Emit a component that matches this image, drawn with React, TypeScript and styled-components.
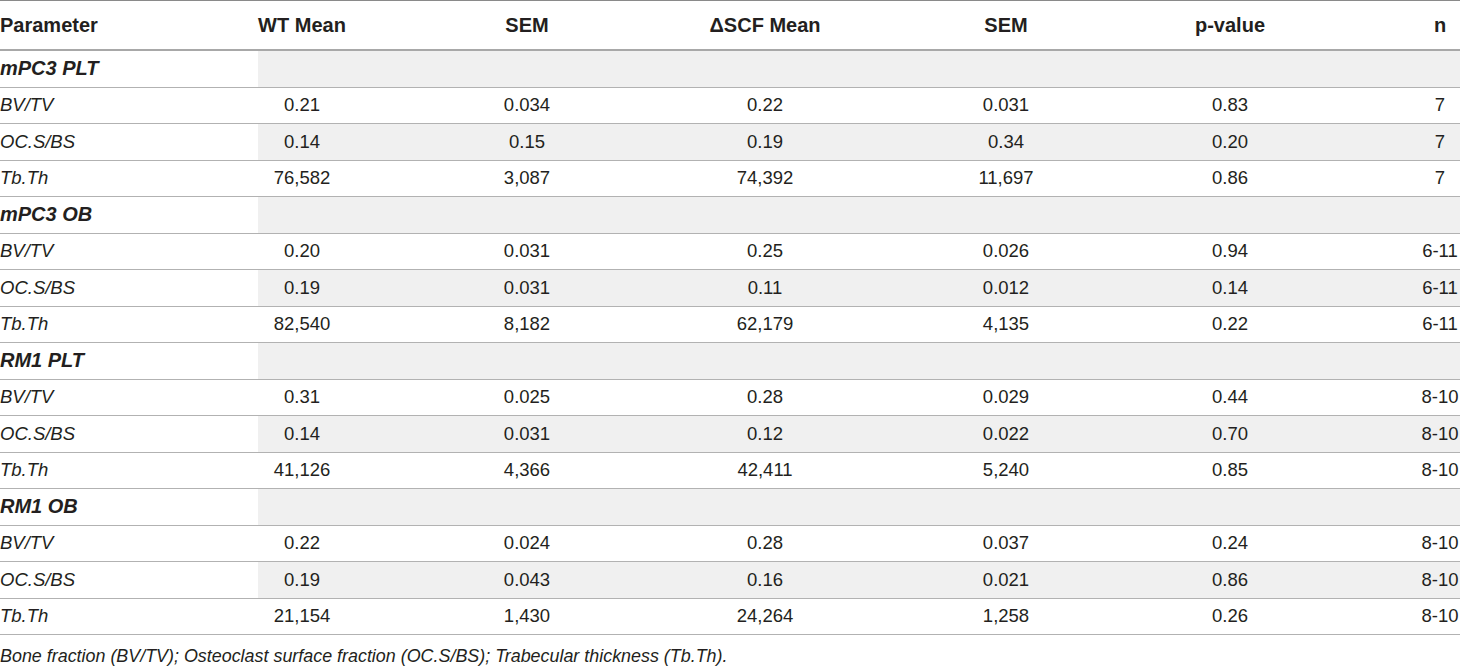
import React from "react";
import styled, { createGlobalStyle } from "styled-components";

const Global = createGlobalStyle`
  html, body { margin: 0; padding: 0; background: #ffffff; }
  body { font-family: "Liberation Sans", Arial, Helvetica, sans-serif; color: #231f20; }
`;

const Wrap = styled.div`
  width: 1460px;
`;

const Table = styled.table`
  width: 1460px;
  border-collapse: collapse;
  table-layout: fixed;
  border-top: 1px solid #8a8a8a;
  font-size: 18.5px;
`;

const HeadCell = styled.th<{ $align?: string; $padLeft?: number }>`
  height: 48px;
  padding: 0 0 0 ${(p) => p.$padLeft ?? 0}px;
  font-weight: bold;
  font-size: 20px;
  text-align: ${(p) => p.$align ?? "center"};
  vertical-align: middle;
  border-bottom: 2px solid #a8a8a8;
`;

const Row = styled.tr<{ $shade: boolean }>`
  border-bottom: 1px solid #b2b2b2;
  & > td:not(:first-child) {
    background: ${(p) => (p.$shade ? "#f0f0f0" : "#ffffff")};
  }
`;

const Cell = styled.td<{ $align?: string; $padLeft?: number }>`
  height: 35.5px;
  padding: 0 0 0 ${(p) => p.$padLeft ?? 0}px;
  text-align: ${(p) => p.$align ?? "center"};
  vertical-align: middle;
  white-space: nowrap;
`;

const GroupLabel = styled.span`
  font-weight: bold;
  font-style: italic;
  font-size: 20px;
`;

const ParamLabel = styled.span`
  font-style: italic;
`;

const Caption = styled.p`
  margin: 11px 0 0 0;
  font-size: 17.9px;
  font-style: italic;
  line-height: 21px;
`;

const widths = [258, 88, 362, 114, 368, 80, 190];
const N_PAD = 150;

type Param = { name: string; v: string[] };
type Group = { title: string; rows: Param[] };

const groups: Group[] = [
  {
    title: "mPC3 PLT",
    rows: [
      { name: "BV/TV", v: ["0.21", "0.034", "0.22", "0.031", "0.83", "7"] },
      { name: "OC.S/BS", v: ["0.14", "0.15", "0.19", "0.34", "0.20", "7"] },
      { name: "Tb.Th", v: ["76,582", "3,087", "74,392", "11,697", "0.86", "7"] },
    ],
  },
  {
    title: "mPC3 OB",
    rows: [
      { name: "BV/TV", v: ["0.20", "0.031", "0.25", "0.026", "0.94", "6-11"] },
      { name: "OC.S/BS", v: ["0.19", "0.031", "0.11", "0.012", "0.14", "6-11"] },
      { name: "Tb.Th", v: ["82,540", "8,182", "62,179", "4,135", "0.22", "6-11"] },
    ],
  },
  {
    title: "RM1 PLT",
    rows: [
      { name: "BV/TV", v: ["0.31", "0.025", "0.28", "0.029", "0.44", "8-10"] },
      { name: "OC.S/BS", v: ["0.14", "0.031", "0.12", "0.022", "0.70", "8-10"] },
      { name: "Tb.Th", v: ["41,126", "4,366", "42,411", "5,240", "0.85", "8-10"] },
    ],
  },
  {
    title: "RM1 OB",
    rows: [
      { name: "BV/TV", v: ["0.22", "0.024", "0.28", "0.037", "0.24", "8-10"] },
      { name: "OC.S/BS", v: ["0.19", "0.043", "0.16", "0.021", "0.86", "8-10"] },
      { name: "Tb.Th", v: ["21,154", "1,430", "24,264", "1,258", "0.26", "8-10"] },
    ],
  },
];

const headers = ["WT Mean", "SEM", "\u0394SCF Mean", "SEM", "p-value", "n"];

export default function App() {
  return (
    <Wrap>
      <Global />
      <Table>
        <colgroup>
          {widths.map((w, i) => (
            <col key={i} style={{ width: w }} />
          ))}
        </colgroup>
        <thead>
          <tr>
            <HeadCell $align="left">Parameter</HeadCell>
            {headers.map((h, i) => (
              <HeadCell key={i} $padLeft={i === 5 ? N_PAD : 0}>
                {h}
              </HeadCell>
            ))}
          </tr>
        </thead>
        <tbody>
          {groups.map((g) => (
            <React.Fragment key={g.title}>
              <Row $shade>
                <Cell $align="left">
                  <GroupLabel>{g.title}</GroupLabel>
                </Cell>
                {headers.map((_, i) => (
                  <Cell key={i} />
                ))}
              </Row>
              {g.rows.map((r, ri) => (
                <Row key={r.name} $shade={ri === 1}>
                  <Cell $align="left">
                    <ParamLabel>{r.name}</ParamLabel>
                  </Cell>
                  {r.v.map((val, i) => (
                    <Cell key={i} $padLeft={i === 5 ? N_PAD : 0}>
                      {val}
                    </Cell>
                  ))}
                </Row>
              ))}
            </React.Fragment>
          ))}
        </tbody>
      </Table>
      <Caption>
        Bone fraction (BV/TV); Osteoclast surface fraction (OC.S/BS); Trabecular thickness (Tb.Th).
      </Caption>
    </Wrap>
  );
}
